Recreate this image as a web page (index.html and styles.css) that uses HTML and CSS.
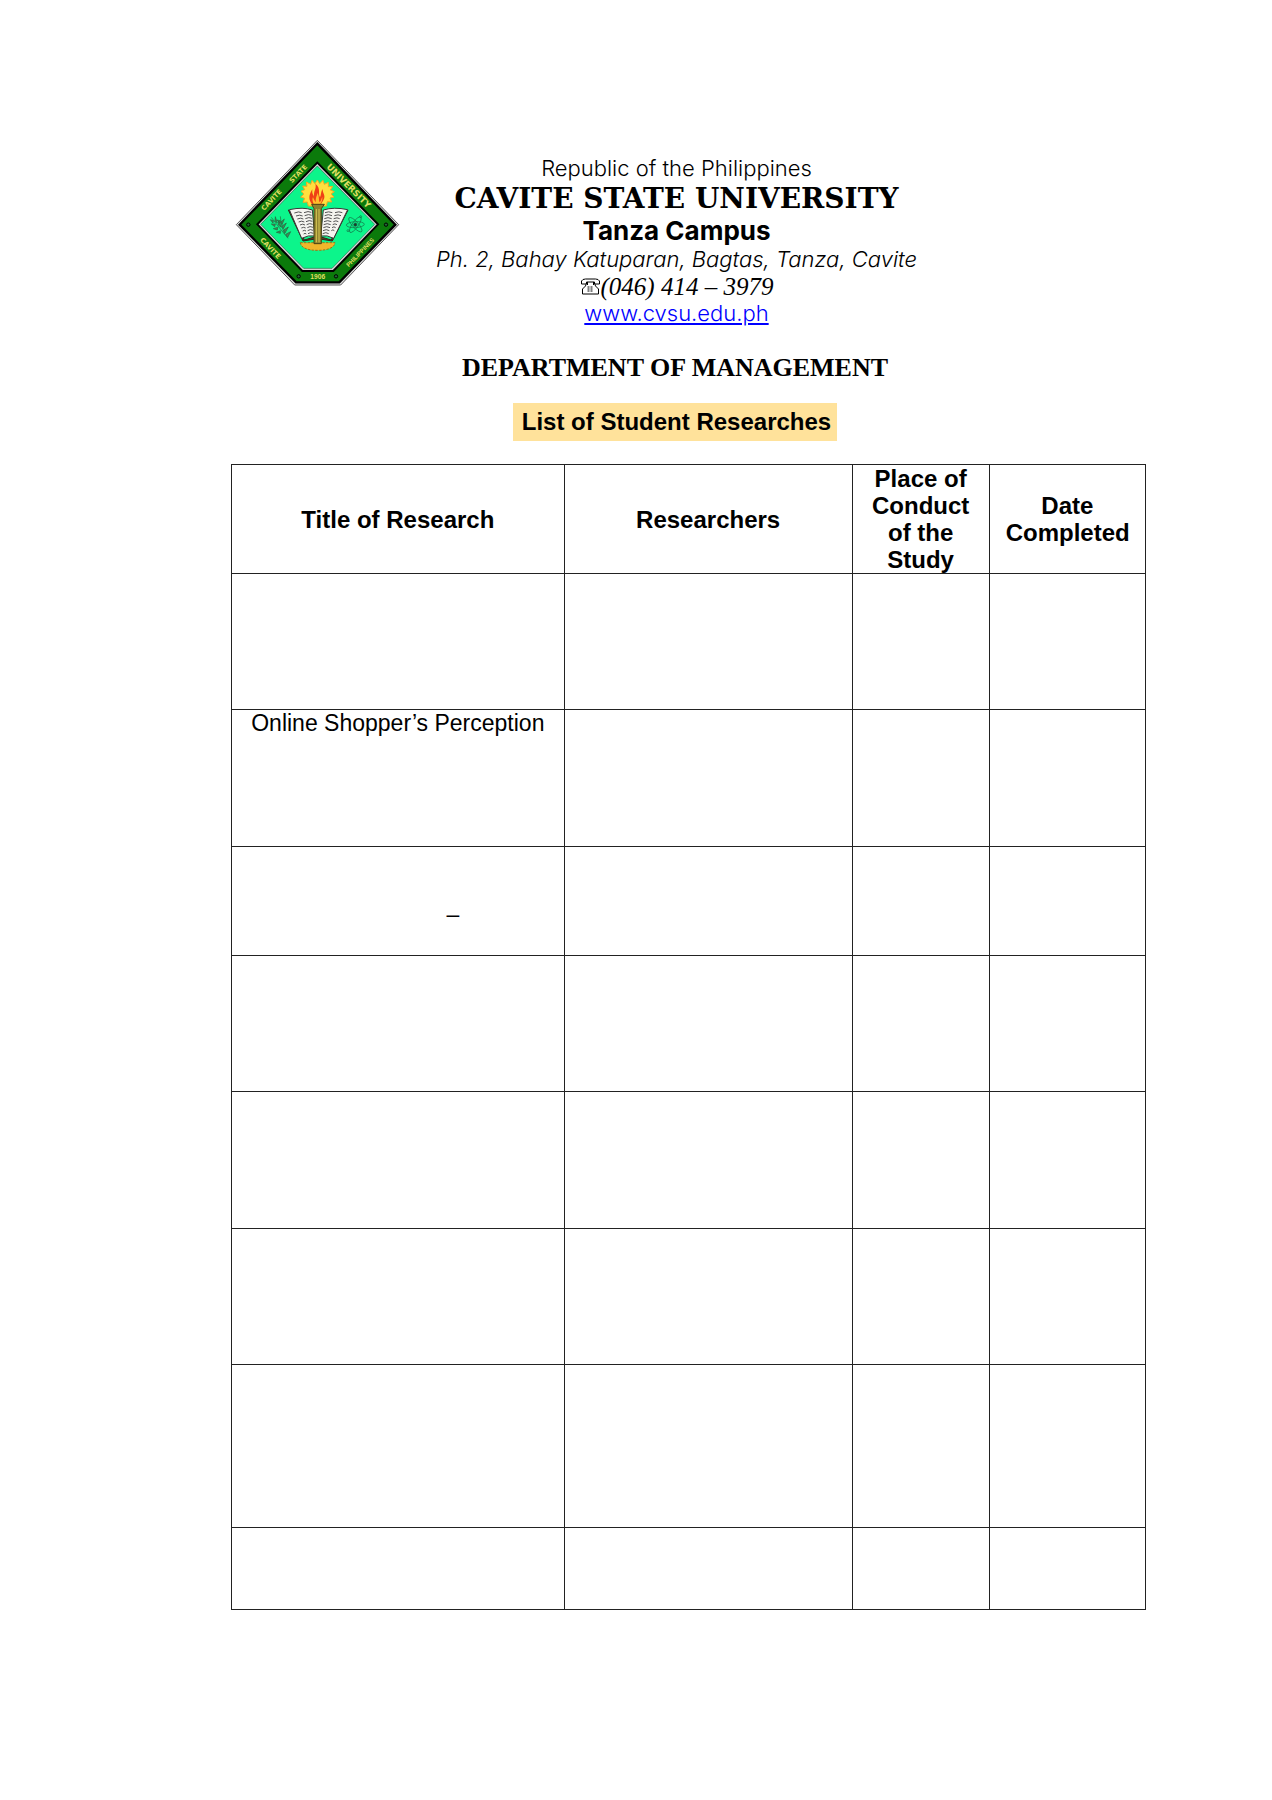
FILE: index.html
```html
<!DOCTYPE html>
<html lang="en">
<head>
<meta charset="utf-8">
<title>List of Student Researches</title>
<link rel="stylesheet" href="styles.css">
</head>
<body>
<main class="page">
  <header class="letterhead">
    <svg class="seal" viewBox="30 27 498 444" role="img" aria-label="Cavite State University seal">
      <path d="M277 31L521 284L347 465H209L34 284Z" fill="#ddd" stroke="#555" stroke-width="3"/>
      <path d="M277 41L511 284L343 457H213L44 284Z" fill="#0b7a0b" stroke="#000" stroke-width="7"/>
      <path d="M277 98L459 283L325 423H232L97 283Z" fill="#d5d5d5" stroke="#000" stroke-width="6"/>
      <path d="M277 108L449 283L321 415H236L107 283Z" fill="#0cf58b" stroke="#286b4c" stroke-width="2"/>
      <g class="seal-text">
        <text transform="translate(117 243) rotate(-46)">CAVITE</text>
        <text transform="translate(201 160) rotate(-46)">STATE</text>
        <text class="seal-wide" transform="translate(303 112) rotate(45)">UNIVERSITY</text>
        <text transform="translate(104 331) rotate(46)">CAVITE</text>
        <text class="seal-narrow" transform="translate(371 412) rotate(-46)">PHILIPPINES</text>
        <text class="seal-year" x="256" y="447">1906</text>
      </g>
      <g fill="#25653b" stroke="#000" stroke-width="3">
        <circle cx="70" cy="284" r="5"/><circle cx="483" cy="284" r="5"/>
        <circle cx="221" cy="439" r="5"/><circle cx="333" cy="439" r="5"/>
      </g>
      <path d="M277 150L284 161L294 151L298 163L310 157L310 170L323 169L316 180L328 185L318 192L327 201L315 204L320 216L307 215L304 228H250L247 216L234 217L239 205L227 201L237 192L228 184L239 179L233 168L246 169L244 156L257 163L261 151L270 161Z" fill="#ffe03e" stroke="#f5a81e" stroke-width="3"/>
      <path d="M262 224C246 205 255 190 262 178C260 195 268 196 268 205C263 182 276 177 271 161C289 175 278 190 285 202C289 194 287 184 293 177C292 190 304 196 295 211L287 224Z" fill="#ef3f16"/>
      <path d="M266 222C261 211 262 206 264 201C267 211 271 213 273 217C270 202 278 197 277 188C284 200 280 207 284 217C290 210 289 205 292 201C293 211 289 216 286 222Z" fill="#ffbd2c"/>
      <path d="M226 338H330C328 353 309 361 278 361C246 361 228 353 226 338Z" fill="#f0b62b" stroke="#9b7417" stroke-width="3" stroke-dasharray="7 4"/>
      <path d="M190 240L234 333L278 326L322 333L369 240L355 250L319 330L278 318L238 330L203 249Z" fill="#63401f" stroke="#33251a" stroke-width="3"/>
      <path d="M193 239Q235 230 262 240L269 318Q251 314 230 325Z" fill="#f4f4ef" stroke="#393939" stroke-width="3"/>
      <path d="M368 239Q327 230 295 240L287 318Q306 314 326 325Z" fill="#f4f4ef" stroke="#393939" stroke-width="3"/>
      <path d="M208 249Q222 243 230 248M213 258Q225 253 233 258M217 267Q228 262 235 267M221 276Q230 271 238 276M225 285Q233 280 240 285M229 294Q236 290 242 294M233 303Q238 299 243 303M236 312Q240 308 244 312M237 248Q250 242 259 247M239 257Q251 251 260 256M241 266Q252 260 261 265M243 275Q253 269 262 274M245 284Q254 278 263 283M247 293Q255 287 264 292M248 302Q256 296 264 301M249 311Q257 305 265 310M300 248Q311 243 322 248M299 257Q310 251 321 257M298 266Q309 260 320 266M297 275Q308 269 319 275M296 284Q307 278 317 284M295 293Q305 287 315 293M294 302Q304 296 313 302M293 311Q303 305 311 311M330 248Q342 243 352 248M328 257Q340 252 348 257M326 266Q337 261 344 266M325 275Q333 270 340 275M323 284Q330 279 336 284M321 293Q327 288 332 293M319 302Q324 297 328 302" fill="none" stroke="#555" stroke-width="3"/>
      <path d="M260 223H298L289 236V341H267V236Z" fill="#8e812e" stroke="#4b4215" stroke-width="3"/>
      <path d="M274 237V337M282 237V337" stroke="#d9c957" stroke-width="3"/>
      <g stroke="#25643e" stroke-width="2" fill="#3f8958">
        <path d="M139 262Q160 290 189 325M166 259Q166 287 179 312" fill="none"/>
        <path d="M145 272L136 269L144 279ZM151 282L139 282L149 290ZM158 292L145 296L157 300ZM166 302L154 307L166 310ZM150 273L151 260L157 279ZM160 285L161 273L169 292ZM166 272L156 270L166 280ZM168 276L178 267L171 284ZM171 288L184 279L175 296ZM176 300L190 291L180 309ZM182 313L197 305L188 322Z"/>
      </g>
      <g fill="none" stroke="#176c45" stroke-width="2">
        <ellipse cx="391" cy="284" rx="9" ry="28" transform="rotate(35 391 284)"/>
        <ellipse cx="391" cy="284" rx="9" ry="28" transform="rotate(-42 391 284)"/>
        <ellipse cx="391" cy="284" rx="9" ry="27" transform="rotate(87 391 284)"/>
        <circle cx="391" cy="284" r="5" fill="#173e2d"/>
        <circle cx="407" cy="260" r="3"/><circle cx="369" cy="302" r="3"/>
      </g>
    </svg>
    <div class="identity">
      <p class="gothic">Republic of the Philippines</p>
      <h1 class="university">CAVITE STATE UNIVERSITY</h1>
      <p class="campus">Tanza Campus</p>
      <p class="gothic address">Ph. 2, Bahay Katuparan, Bagtas, Tanza, Cavite</p>
      <p class="phone">
        <svg class="phone-icon" viewBox="0 0 20 17" aria-hidden="true">
          <path d="M1 6V3Q2 1 5 1H15Q18 1 19 3V6H14V4H6V6ZM6 5L5 8L2 11V16H18V11L15 8L14 5M7 4V7M13 4V7" fill="none" stroke="#000"/>
          <path d="M7 9H13M7 11H13M7 13H13" stroke="#000" stroke-dasharray="2 1"/>
        </svg><span>(046) 414 – 3979</span>
      </p>
      <p class="gothic website"><a href="http://www.cvsu.edu.ph">www.cvsu.edu.ph</a></p>
    </div>
  </header>
  <div class="headings">
    <h2 class="department">DEPARTMENT OF MANAGEMENT</h2>
    <h3 class="list-title">List of Student Researches</h3>
  </div>
  <table class="researches">
    <colgroup><col class="col-title"><col class="col-people"><col class="col-place"><col class="col-date"></colgroup>
    <thead>
      <tr><th scope="col">Title of Research</th><th scope="col">Researchers</th><th scope="col">Place of Conduct of the Study</th><th scope="col">Date Completed</th></tr>
    </thead>
    <tbody>
      <tr class="medium"><td></td><td></td><td></td><td></td></tr>
      <tr class="roomy"><td>Online Shopper’s Perception</td><td></td><td></td><td></td></tr>
      <tr class="short"><td class="dash">–</td><td></td><td></td><td></td></tr>
      <tr class="medium"><td></td><td></td><td></td><td></td></tr>
      <tr class="roomy"><td></td><td></td><td></td><td></td></tr>
      <tr class="medium"><td></td><td></td><td></td><td></td></tr>
      <tr class="tall"><td></td><td></td><td></td><td></td></tr>
      <tr class="brief"><td></td><td></td><td></td><td></td></tr>
    </tbody>
  </table>
</main>
</body>
</html>
```
FILE: styles.css
```css
* { box-sizing: border-box; }
body { margin: 0; background: #fff; color: #000; font-family: "Liberation Sans", Arial, sans-serif; font-size: 24px; line-height: 27px; }
h1, h2, h3, p { margin: 0; }
.page { padding: 139px 126px 190px 231px; }
.letterhead { display: grid; grid-template-columns: 168px 1fr 168px; padding-right: 24px; }
.seal { width: 166px; height: 148px; margin-left: 4px; }
.seal-text { font-family: "DejaVu Sans", sans-serif; font-weight: bold; font-size: 20px; fill: #e0df62; }
.seal-wide { font-size: 26px; }
.seal-narrow { font-family: "Liberation Sans", sans-serif; font-size: 18px; }
.seal-year { font-family: "Liberation Sans", sans-serif; }
.identity { padding-top: 16px; text-align: center; white-space: nowrap; }
.gothic { font-family: Inter, sans-serif; font-size: 22px; font-weight: 300; }
.university { font-family: "DejaVu Serif", serif; font-size: 28px; line-height: 34px; }
.campus { font-family: Inter, sans-serif; font-weight: bold; font-size: 26px; line-height: 30px; }
.address { font-style: italic; }
.phone { display: flex; justify-content: center; align-items: center; font-family: "Liberation Serif", serif; font-style: italic; font-size: 25px; }
.phone-icon { width: 21px; height: 17px; }
.website a { color: #00f; }
.headings { display: flex; flex-direction: column; align-items: center; padding: 26px 27px 23px 0; }
.department { font-family: "Liberation Serif", serif; font-size: 26px; line-height: 30px; }
.list-title { margin-top: 20px; padding: 6px 6px 6px 9px; background: #ffe29b; font-size: 24px; line-height: 26px; }
.researches { width: 100%; table-layout: fixed; border-collapse: collapse; }
.col-title { width: 36.4%; }
.col-people { width: 31.5%; }
.col-place { width: 15%; }
.researches th, .researches td { border: 1px solid #222; padding: 0 16px; text-align: center; vertical-align: top; }
.researches th { vertical-align: middle; }
.researches td { padding: 0; font-size: 23px; }
.medium { height: 136px; }
.roomy { height: 137px; }
.short { height: 109px; }
.tall { height: 163px; }
.brief { height: 82px; }
.researches .dash { padding: 54px 0 0 110px; }
```
